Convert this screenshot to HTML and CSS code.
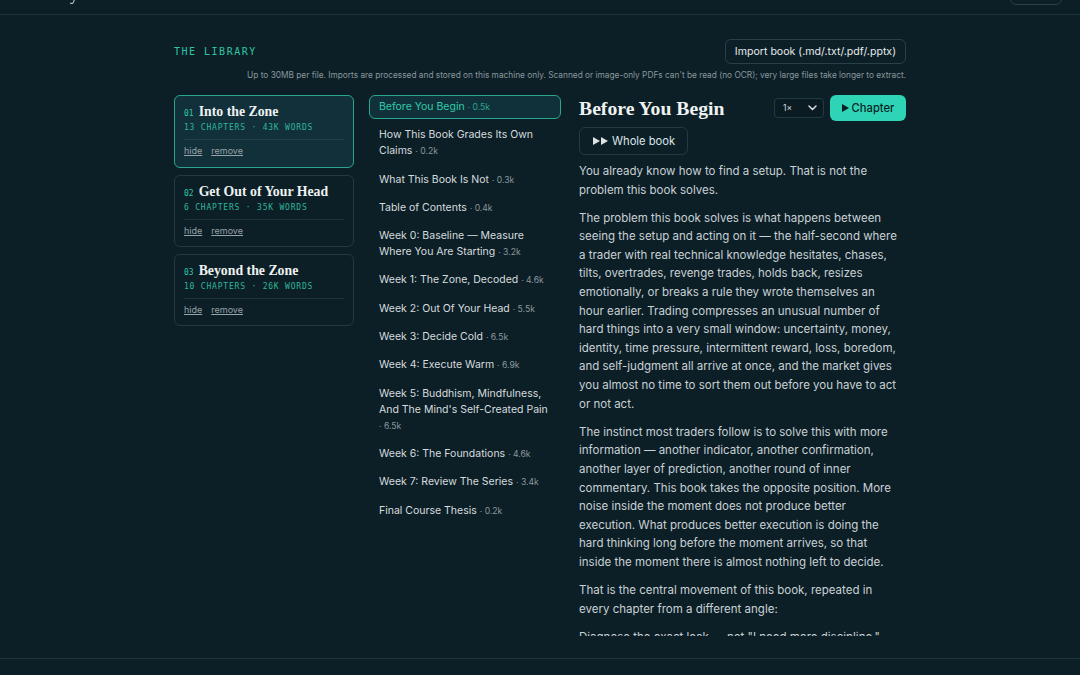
FILE: index.html
```html
<!DOCTYPE html>
<html lang="en">
<head>
<meta charset="utf-8">
<title>The Library</title>
<link rel="stylesheet" href="styles.css">
</head>
<body>
<div class="app">
  <header class="topbar">
    <div class="brand">Library</div>
    <button class="top-btn">Menu</button>
  </header>
  <main class="main">
    <div class="lib-head">
      <div class="eyebrow">THE LIBRARY</div>
      <button class="import-btn">Import book (.md/.txt/.pdf/.pptx)</button>
    </div>
    <p class="note">Up to 30MB per file. Imports are processed and stored on this machine only. Scanned or image-only PDFs can't be read (no OCR); very large files take longer to extract.</p>
    <div class="cols">
      <div class="books">
        <div class="book active">
          <div class="book-title"><span class="num">01</span>Into the Zone</div>
          <div class="meta">13 CHAPTERS · 43K WORDS</div>
          <div class="book-actions"><a>hide</a><a>remove</a></div>
        </div>
        <div class="book">
          <div class="book-title"><span class="num">02</span>Get Out of Your Head</div>
          <div class="meta">6 CHAPTERS · 35K WORDS</div>
          <div class="book-actions"><a>hide</a><a>remove</a></div>
        </div>
        <div class="book">
          <div class="book-title"><span class="num">03</span>Beyond the Zone</div>
          <div class="meta">10 CHAPTERS · 26K WORDS</div>
          <div class="book-actions"><a>hide</a><a>remove</a></div>
        </div>
      </div>
      <ul class="chapters">
        <li class="active">Before You Begin <span class="sz">· 0.5k</span></li>
        <li>How This Book Grades Its Own Claims <span class="sz">· 0.2k</span></li>
        <li>What This Book Is Not <span class="sz">· 0.3k</span></li>
        <li>Table of Contents <span class="sz">· 0.4k</span></li>
        <li>Week 0: Baseline — Measure Where You Are Starting <span class="sz">· 3.2k</span></li>
        <li>Week 1: The Zone, Decoded <span class="sz">· 4.6k</span></li>
        <li>Week 2: Out Of Your Head <span class="sz">· 5.5k</span></li>
        <li>Week 3: Decide Cold <span class="sz">· 6.5k</span></li>
        <li>Week 4: Execute Warm <span class="sz">· 6.9k</span></li>
        <li>Week 5: Buddhism, Mindfulness, And The Mind's Self-Created Pain <span class="sz">· 6.5k</span></li>
        <li>Week 6: The Foundations <span class="sz">· 4.6k</span></li>
        <li>Week 7: Review The Series <span class="sz">· 3.4k</span></li>
        <li>Final Course Thesis <span class="sz">· 0.2k</span></li>
      </ul>
      <section class="reader">
        <div class="reader-head">
          <h1 class="chap-title">Before You Begin</h1>
          <div class="speed">1×<svg width="9" height="6" viewBox="0 0 9 6"><path d="M1 1l3.5 3.5L8 1" fill="none" stroke="#d5dde0" stroke-width="1.5" stroke-linecap="round" stroke-linejoin="round"/></svg></div>
          <button class="play-btn"><svg class="tri" width="7" height="8" viewBox="0 0 7 8"><path d="M0 0L7 4L0 8Z" fill="#0c1f27"/></svg>Chapter</button>
        </div>
        <button class="whole-btn"><svg class="tri2" width="16" height="8" viewBox="0 0 16 8"><path d="M0 0L7 4L0 8Z M8 0L15 4L8 8Z" fill="#dde3e5"/></svg>Whole book</button>
        <div class="body">
          <p>You already know how to find a setup. That is not the problem this book solves.</p>
          <p>The problem this book solves is what happens between seeing the setup and acting on it — the half-second where a trader with real technical knowledge hesitates, chases, tilts, overtrades, revenge trades, holds back, resizes emotionally, or breaks a rule they wrote themselves an hour earlier. Trading compresses an unusual number of hard things into a very small window: uncertainty, money, identity, time pressure, intermittent reward, loss, boredom, and self-judgment all arrive at once, and the market gives you almost no time to sort them out before you have to act or not act.</p>
          <p>The instinct most traders follow is to solve this with more information — another indicator, another confirmation, another layer of prediction, another round of inner commentary. This book takes the opposite position. More noise inside the moment does not produce better execution. What produces better execution is doing the hard thinking long before the moment arrives, so that inside the moment there is almost nothing left to decide.</p>
          <p>That is the central movement of this book, repeated in every chapter from a different angle:</p>
          <p>Diagnose the exact leak — not "I need more discipline," but the specific moment where your process breaks and what it costs you.</p>
        </div>
      </section>
    </div>
  </main>
  <footer class="footer"></footer>
</div>
</body>
</html>
```

FILE: styles.css
```css
* { box-sizing: border-box; }
html, body { margin: 0; padding: 0; }
body {
  background: #0c1f27;
  color: #d3dadd;
  font-family: Inter, "Noto Sans", sans-serif;
  overflow: hidden;
}
.app {
  height: 675px;
  display: flex;
  flex-direction: column;
}
.topbar {
  height: 41px;
  margin-top: -26px;
  flex: none;
  display: flex;
  justify-content: space-between;
  align-items: flex-end;
  padding: 0 18px 9px 30px;
  border-bottom: 1px solid #1e343d;
}
.brand {
  font-family: "Liberation Serif", serif;
  font-size: 16px;
  color: #e8eeee;
  line-height: 18px;
  margin-bottom: 1px;
}
.top-btn {
  width: 52px;
  height: 28px;
  border: 1px solid #29404a;
  border-radius: 6px;
  background: transparent;
  color: transparent;
  font-size: 11px;
}
.main {
  flex: 1;
  min-height: 0;
  padding: 24px 174px 22px;
  display: flex;
  flex-direction: column;
}
.lib-head {
  display: flex;
  justify-content: space-between;
  align-items: center;
  height: 25px;
}
.eyebrow {
  font-family: "DejaVu Sans Mono", monospace;
  font-size: 10px;
  letter-spacing: 1.5px;
  color: #2fc4a5;
}
.import-btn {
  height: 25px;
  padding: 0 9px;
  background: #0c1f27;
  border: 1px solid #2a4049;
  border-radius: 6px;
  color: #e4eaec;
  font-family: Inter, sans-serif;
  font-size: 10.6px;
}
.note {
  margin: 5px 0 0;
  text-align: right;
  font-size: 8.3px;
  line-height: 12px;
  color: #8a979c;
}
.cols {
  flex: 1;
  min-height: 0;
  margin-top: 14px;
  display: grid;
  grid-template-columns: 180px 192px 1fr;
  column-gap: 15px;
}
.books {
  display: flex;
  flex-direction: column;
  gap: 7px;
}
.book {
  border: 1px solid #233a43;
  border-radius: 6px;
  padding: 7px 9px 9px;
  height: 72px;
}
.book.active {
  background: #12303a;
  border-color: #2aa58f;
  height: 73px;
}
.book-title {
  font-family: "Liberation Serif", serif;
  font-weight: bold;
  font-size: 13.8px;
  line-height: 18px;
  color: #eef2f1;
  display: flex;
  align-items: baseline;
  white-space: nowrap;
}
.num {
  font-family: "DejaVu Sans Mono", monospace;
  font-weight: normal;
  font-size: 8px;
  color: #2fc4a5;
  margin-right: 5px;
}
.meta {
  font-family: "DejaVu Sans Mono", monospace;
  font-size: 8px;
  letter-spacing: 0.8px;
  line-height: 10px;
  color: #2fb69b;
  padding-bottom: 6px;
  border-bottom: 1px solid #1d343d;
}
.book.active .meta { border-bottom-color: #1f4049; }
.book-actions {
  margin-top: 5px;
  display: flex;
  gap: 9px;
  font-size: 9px;
  line-height: 12px;
}
.book-actions a {
  color: #97a3a8;
  text-decoration: underline;
}
.chapters {
  list-style: none;
  margin: 0;
  padding: 0;
  display: flex;
  flex-direction: column;
  gap: 4.3px;
}
.chapters li {
  padding: 3px 9px;
  border: 1px solid transparent;
  border-radius: 6px;
  font-size: 10.5px;
  line-height: 16px;
  color: #d6dcde;
}
.chapters li.active {
  background: #11313a;
  border-color: #2aa58f;
  color: #2fcaa9;
}
.sz {
  font-size: 8.6px;
  line-height: 1;
  color: #8b979c;
}
.chapters li.active .sz { color: #2aa58f; }
.reader {
  padding-left: 3px;
  overflow: hidden;
  min-height: 0;
}
.reader-head {
  display: flex;
  align-items: center;
  gap: 6px;
  height: 26px;
}
.chap-title {
  flex: 1;
  margin: 0;
  font-family: "Liberation Serif", serif;
  font-weight: bold;
  font-size: 19.7px;
  line-height: 26px;
  color: #eef2f1;
}
.speed {
  width: 50px;
  height: 20px;
  border: 1px solid #243a43;
  border-radius: 4px;
  background: #0a1b22;
  display: flex;
  align-items: center;
  justify-content: space-between;
  padding: 0 6px 0 8px;
  font-size: 8.5px;
  color: #d5dde0;
}
.play-btn {
  height: 26px;
  width: 76px;
  border: none;
  border-radius: 6px;
  background: #2fd4b6;
  color: #0c1f27;
  font-family: Inter, sans-serif;
  font-size: 11.2px;
  font-weight: 500;
  padding: 0;
  display: flex;
  align-items: center;
  justify-content: center;
  gap: 3px;
}
.whole-btn {
  margin-top: 6px;
  height: 28px;
  padding: 0 12px 0 13px;
  border: 1px solid #243a43;
  border-radius: 6px;
  background: transparent;
  color: #dde3e5;
  font-family: Inter, sans-serif;
  font-size: 11.2px;
  display: flex;
  align-items: center;
  gap: 3px;
  white-space: nowrap;
}
.body {
  margin-top: 7px;
  padding-right: 6px;
}
.body p {
  margin: 0 0 9.5px;
  font-size: 11.5px;
  line-height: 18.6px;
  color: #c9d1d4;
}
.footer {
  flex: none;
  height: 17px;
  border-top: 1px solid #1f343c;
}
```
